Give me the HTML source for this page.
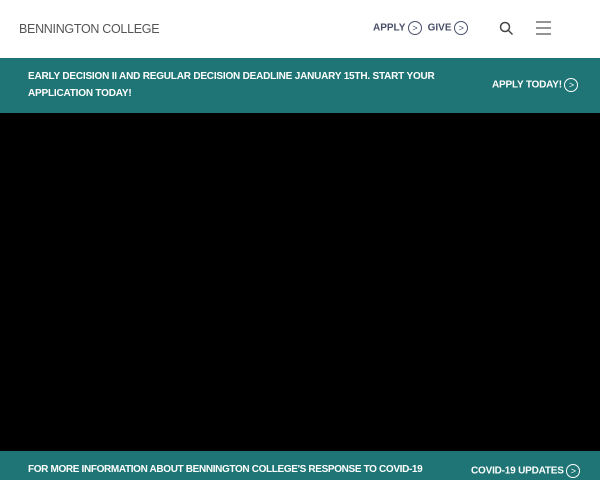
<!DOCTYPE html><html><head><style>
body{margin:0;width:600px;height:480px;overflow:hidden;font-family:"Liberation Sans",sans-serif;background:#fff;position:relative}
.a{position:absolute}
.c{display:inline-block;width:12px;height:12px;border:1px solid currentColor;border-radius:50%;font-size:9px;line-height:12px;text-align:center;vertical-align:middle;font-weight:normal}
.w{color:#fff;font-weight:bold;font-size:10px;letter-spacing:-0.2px}
</style></head><body>
<div class="a" style="left:19px;top:22px;font-size:12.5px;color:#555;letter-spacing:-0.3px">BENNINGTON COLLEGE</div>
<div class="a" style="left:373px;top:21px;font-size:10px;font-weight:bold;color:#4a4f6a">APPLY <span class="c">&gt;</span>&nbsp; GIVE <span class="c">&gt;</span></div>
<svg class="a" style="left:499px;top:21px" width="15" height="15"><circle cx="6" cy="6" r="4.5" fill="none" stroke="#444" stroke-width="1.5"/><line x1="9.5" y1="9.5" x2="13.5" y2="13.5" stroke="#444" stroke-width="1.5"/></svg>
<svg class="a" style="left:536px;top:20px" width="16" height="16"><path d="M0 2H15M0 8H15M0 14H15" stroke="#555" stroke-width="1.3"/></svg>
<div class="a" style="left:0;top:58px;width:600px;height:55px;background:#1f7575"></div>
<div class="a w" style="left:28px;top:69px;line-height:16.5px">EARLY DECISION II AND REGULAR DECISION DEADLINE JANUARY 15TH. START YOUR<br>APPLICATION TODAY!</div>
<div class="a w" style="left:492px;top:78px">APPLY TODAY! <span class="c">&gt;</span></div>
<div class="a" style="left:0;top:113px;width:600px;height:338px;background:#000"></div>
<div class="a" style="left:0;top:451px;width:600px;height:29px;background:#1f7575"></div>
<div class="a w" style="left:28px;top:464px;letter-spacing:-0.35px">FOR MORE INFORMATION ABOUT BENNINGTON COLLEGE'S RESPONSE TO COVID-19</div>
<div class="a w" style="left:471px;top:464px">COVID-19 UPDATES <span class="c">&gt;</span></div>
</body></html>
